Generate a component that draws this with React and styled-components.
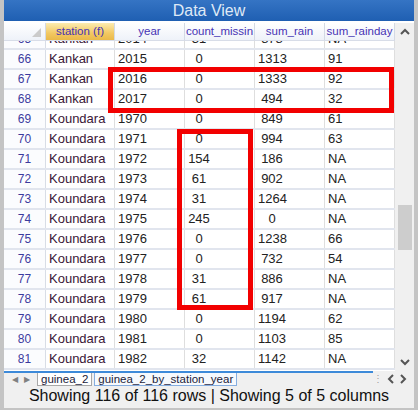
import React from "react";
import styled, { createGlobalStyle } from "styled-components";

const GlobalStyle = createGlobalStyle`
  html, body {
    margin: 0;
    padding: 0;
    background: #ffffff;
  }
  body {
    font-family: "Liberation Sans", Arial, sans-serif;
  }
`;

const columns = [
  { key: "station", label: "station (f)", selected: true, align: "left" },
  { key: "year", label: "year", align: "left" },
  { key: "missing", label: "count_missin", align: "center", padRight: 44 },
  { key: "rain", label: "sum_rain", align: "center", padRight: 38 },
  { key: "rainday", label: "sum_rainday", align: "left" },
];

const rows = [
  [65, "Kankan", 2014, 31, 878, "NA"],
  [66, "Kankan", 2015, 0, 1313, 91],
  [67, "Kankan", 2016, 0, 1333, 92],
  [68, "Kankan", 2017, 0, 494, 32],
  [69, "Koundara", 1970, 0, 849, 61],
  [70, "Koundara", 1971, 0, 994, 63],
  [71, "Koundara", 1972, 154, 186, "NA"],
  [72, "Koundara", 1973, 61, 902, "NA"],
  [73, "Koundara", 1974, 31, 1264, "NA"],
  [74, "Koundara", 1975, 245, 0, "NA"],
  [75, "Koundara", 1976, 0, 1238, 66],
  [76, "Koundara", 1977, 0, 732, 54],
  [77, "Koundara", 1978, 31, 886, "NA"],
  [78, "Koundara", 1979, 61, 917, "NA"],
  [79, "Koundara", 1980, 0, 1194, 62],
  [80, "Koundara", 1981, 0, 1103, 85],
  [81, "Koundara", 1982, 32, 1142, "NA"],
];

const GRID = "42px 69px 70px 70px 70px 70px";

const Window = styled.div`
  position: relative;
  width: 418px;
  height: 410px;
  box-sizing: border-box;
  padding: 0 4px 2px 4px;
  background: #c4c4c4;
  display: flex;
  flex-direction: column;
  overflow: hidden;
`;

const TitleBar = styled.div`
  height: 21px;
  background: linear-gradient(#3574c4, #1f5fb2);
  color: #dfe9f6;
  font-size: 16px;
  line-height: 21px;
  text-align: center;
  margin-bottom: 2px;
  box-shadow: 0 2px 0 #ffffff;
`;

const GridArea = styled.div`
  display: flex;
  background: #ffffff;
`;

const Table = styled.div`
  width: 391px;
  display: flex;
  flex-direction: column;
`;

const HeaderRow = styled.div`
  display: grid;
  grid-template-columns: ${GRID};
  height: 18px;
`;

const HeadCell = styled.div`
  box-sizing: border-box;
  border-right: 1px solid #d3d9e4;
  border-bottom: 1px solid #d8dde8;
  background: ${(p) =>
    p.$selected
      ? "linear-gradient(#fcecb0, #f2c862 60%, #eab949)"
      : "linear-gradient(#ffffff, #eef2f9)"};
  color: #4633b4;
  font-size: 11.5px;
  line-height: 17px;
  text-align: center;
  white-space: nowrap;
  overflow: hidden;
`;

const CornerCell = styled(HeadCell)`
  display: flex;
  justify-content: flex-end;
  align-items: flex-end;
  padding: 0 4px 3px 0;

  &::after {
    content: "";
    display: block;
    width: 0;
    height: 0;
    border-left: 9px solid transparent;
    border-bottom: 9px solid #cbcbcb;
  }
`;

const Body = styled.div`
  height: 330px;
  overflow: hidden;
`;

const Scrolled = styled.div`
  margin-top: ${(p) => -p.$offset}px;
`;

const Row = styled.div`
  display: grid;
  grid-template-columns: ${GRID};
  height: 20px;
  box-sizing: border-box;
  border-bottom: 2px solid #e1e5ee;
`;

const RowNum = styled.div`
  border-right: 1px solid #d8dde6;
  background: #fbfcfe;
  color: #3b3b9e;
  font-size: 12px;
  line-height: 18px;
  text-align: center;
`;

const Cell = styled.div`
  box-sizing: border-box;
  border-right: 1px solid #dedede;
  padding: 0 ${(p) => p.$padRight || 0}px 0 3px;
  color: ${(p) => (p.$factor ? "#3a1636" : "#222222")};
  font-size: 13px;
  line-height: 18px;
  text-align: ${(p) => p.$align};
  white-space: nowrap;
  overflow: hidden;
`;

const VScroll = styled.div`
  width: 19px;
  background: #f0f0f0;
  display: flex;
  flex-direction: column;
`;

const ScrollBtn = styled.div`
  height: 18px;
  display: flex;
  align-items: center;
  justify-content: center;
`;

const Track = styled.div`
  flex: 1;
`;

const Thumb = styled.div`
  margin: ${(p) => p.$top}px 2px 0 3px;
  height: 45px;
  background: #cdcdcd;
`;

const TabStrip = styled.div`
  height: 15px;
  display: flex;
  align-items: flex-start;
  background: #f0f0f0;
`;

const TabLine = styled.div`
  width: 369px;
  height: 100%;
  box-sizing: border-box;
  border-top: 2px solid #3d8ad9;
  display: flex;
  align-items: flex-start;
`;

const TabArrows = styled.div`
  width: 33px;
  display: flex;
  justify-content: center;
  gap: 6px;
  padding-top: 3px;
  color: #808080;
  font-size: 8px;
  line-height: 8px;
`;

const Tab = styled.div`
  height: 13px;
  box-sizing: border-box;
  padding: 0 3px;
  margin-right: 2px;
  border: 1px solid ${(p) => (p.$active ? "#a8a8a8" : "#86aee0")};
  border-top: none;
  background: ${(p) => (p.$active ? "#ffffff" : "#f6f9fd")};
  color: #1c1c3a;
  font-size: 11.5px;
  line-height: 12px;
  white-space: nowrap;
`;

const TabNav = styled.div`
  flex: 1;
  display: flex;
  align-items: center;
  gap: 4px;
  padding: 2px 0 0 0;
  color: #a0a0a0;
  font-size: 10px;
`;

const StatusBar = styled.div`
  flex: 1;
  background: #f0f0f0;
  color: #111111;
  font-size: 16px;
  line-height: 20px;
  text-align: center;
  white-space: nowrap;
`;

const Highlight = styled.div`
  position: absolute;
  box-sizing: border-box;
  border: 5px solid #f20000;
  left: ${(p) => p.$x}px;
  top: ${(p) => p.$y}px;
  width: ${(p) => p.$w}px;
  height: ${(p) => p.$h}px;
  pointer-events: none;
`;

const Chevron = ({ dir, color = "#555" }) => {
  const pts = {
    up: "1,6 5,2 9,6",
    down: "1,2 5,6 9,2",
    left: "6,1 2,5 6,9",
    right: "2,1 6,5 2,9",
  }[dir];
  const vertical = dir === "up" || dir === "down";
  return (
    <svg width={vertical ? 10 : 8} height={vertical ? 8 : 10} viewBox={vertical ? "0 0 10 8" : "0 0 8 10"}>
      <polyline points={pts} fill="none" stroke={color} strokeWidth="2" />
    </svg>
  );
};

export default function App() {
  return (
    <>
      <GlobalStyle />
      <Window>
        <TitleBar>Data View</TitleBar>
        <GridArea>
          <Table>
            <HeaderRow>
              <CornerCell />
              {columns.map((c) => (
                <HeadCell key={c.key} $selected={c.selected}>
                  {c.label}
                </HeadCell>
              ))}
            </HeaderRow>
            <Body>
              <Scrolled $offset={11}>
                {rows.map(([n, ...vals]) => (
                  <Row key={n}>
                    <RowNum>{n}</RowNum>
                    {vals.map((v, i) => (
                      <Cell
                        key={columns[i].key}
                        $align={columns[i].align}
                        $padRight={columns[i].padRight}
                        $factor={i === 0}
                      >
                        {v}
                      </Cell>
                    ))}
                  </Row>
                ))}
              </Scrolled>
            </Body>
          </Table>
          <VScroll>
            <ScrollBtn>
              <Chevron dir="up" />
            </ScrollBtn>
            <Track>
              <Thumb $top={164} />
            </Track>
            <ScrollBtn>
              <Chevron dir="down" />
            </ScrollBtn>
          </VScroll>
        </GridArea>
        <TabStrip>
          <TabLine>
            <TabArrows>
              <span>◀</span>
              <span>▶</span>
            </TabArrows>
            <Tab $active>guinea_2</Tab>
            <Tab>guinea_2_by_station_year</Tab>
          </TabLine>
          <TabNav>
            <span>⋮</span>
            <Chevron dir="left" />
            <Chevron dir="right" />
          </TabNav>
        </TabStrip>
        <StatusBar>Showing 116 of 116 rows | Showing 5 of 5 columns</StatusBar>
        <Highlight $x={108} $y={67} $w={286} $h={46} />
        <Highlight $x={177} $y={129} $w={76} $h={181} />
      </Window>
    </>
  );
}
